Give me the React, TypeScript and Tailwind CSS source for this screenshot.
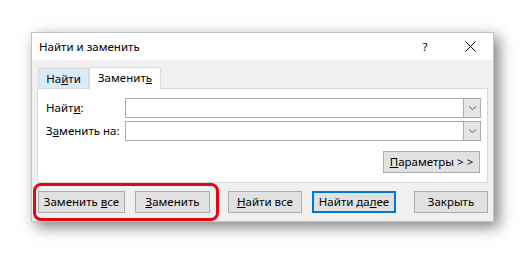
import React from "react";

const font = { fontFamily: '"Noto Sans", "Liberation Sans", sans-serif' };

function Btn({
  children,
  className = "",
  primary = false,
}: {
  children: React.ReactNode;
  className?: string;
  primary?: boolean;
}) {
  return (
    <div
      className={
        "h-[22px] flex items-center justify-center bg-[#e1e1e1] text-[11.5px] text-black leading-none " +
        (primary ? "border-2 border-[#0078d7] " : "border border-[#adadad] ") +
        className
      }
    >
      {children}
    </div>
  );
}

function Combo() {
  return (
    <div className="flex-1 h-[20px] border border-[#ababab] bg-white flex justify-end">
      <div className="w-[17px] h-full bg-[#e5e5e5] border-l border-[#ababab] flex items-center justify-center">
        <svg width="9" height="6" viewBox="0 0 9 6">
          <path d="M1 1.5 L4.5 4.5 L8 1.5" fill="none" stroke="#606060" strokeWidth="1" />
        </svg>
      </div>
    </div>
  );
}

export default function App() {
  return (
    <div className="w-[526px] h-[254px] bg-white relative pt-[32px] pl-[31px]" style={font}>
      <div className="w-[463px] h-[190px] flex flex-col border border-[#c4c4c4] shadow-[5px_5px_14px_rgba(0,0,0,0.5)]">
        {/* title bar */}
        <div className="h-[27px] bg-white flex items-center pl-[7px] text-[11.5px] text-black">
          <span className="flex-1">Найти и заменить</span>
          <span className="w-[16px] text-center mr-[32px]">?</span>
          <svg width="11" height="11" viewBox="0 0 11 11" className="mr-[17px]">
            <path d="M0.5 0.5 L10.5 10.5 M10.5 0.5 L0.5 10.5" stroke="#000" strokeWidth="1" />
          </svg>
        </div>
        {/* body */}
        <div className="flex-1 bg-[#f0f0f0] px-[5px] flex flex-col">
          <div className="flex items-end mt-[6px] pl-[1px] h-[22px]">
            <div className="h-[20px] w-[51px] bg-[#d9ebf9] border border-[#d9d9d9] border-b-0 flex items-center justify-center text-[11.5px] text-black">
              <span>
                На<u>й</u>ти
              </span>
            </div>
            <div className="h-[22px] w-[72px] bg-white border border-[#d9d9d9] border-b-0 relative top-[1px] z-10 flex items-center justify-center text-[11.5px] text-black pb-[1px]">
              <span>
                Замени<span>т</span>
                <u>ь</u>
              </span>
            </div>
          </div>
          <div className="h-[95px] bg-white border border-[#d9d9d9] pt-[9px] pl-[8px] pr-[6px] flex flex-col">
            <div className="flex items-center h-[20px]">
              <span className="w-[79px] text-[11.5px] text-black">
                Найт<u>и</u>:
              </span>
              <Combo />
            </div>
            <div className="flex items-center h-[20px] mt-[3px]">
              <span className="w-[79px] text-[11.5px] text-black">
                З<u>а</u>менить на:
              </span>
              <Combo />
            </div>
            <div className="flex justify-end mt-[10px] pr-[1px]">
              <Btn className="w-[97px] h-[21px]">
                <span>
                  <u>П</u>араметры &gt; &gt;
                </span>
              </Btn>
            </div>
          </div>
          <div className="flex items-center mt-[8px] pl-[1px]">
            <Btn className="w-[87px]">
              <span>
                Заменить <u>в</u>се
              </span>
            </Btn>
            <Btn className="w-[75px] ml-[10px]">
              <span>
                <u>З</u>аменить
              </span>
            </Btn>
            <Btn className="w-[74px] ml-[18px]">
              <span>
                <u>Н</u>айти все
              </span>
            </Btn>
            <Btn primary className="w-[84px] ml-[10px]">
              <span>
                Найти да<u>л</u>ее
              </span>
            </Btn>
            <Btn className="w-[74px] ml-[18px]">
              <span>Закрыть</span>
            </Btn>
          </div>
        </div>
      </div>
      {/* red highlight */}
      <div className="absolute left-[33px] top-[183px] w-[186px] h-[38px] border-[3px] border-[#e30613] rounded-[8px]" />
    </div>
  );
}
